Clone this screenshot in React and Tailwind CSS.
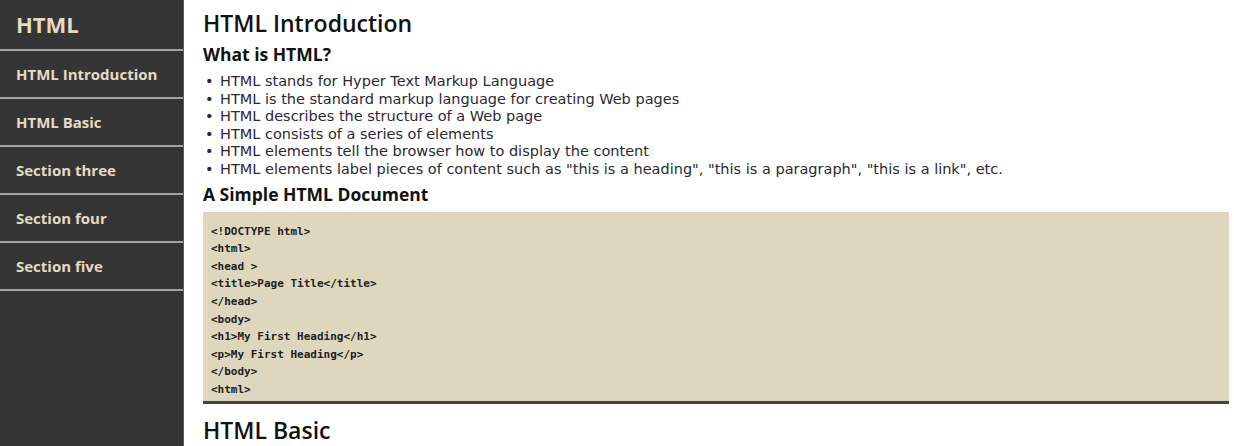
const navItems = [
  "HTML Introduction",
  "HTML Basic",
  "Section three",
  "Section four",
  "Section five",
];

const bullets = [
  "HTML stands for Hyper Text Markup Language",
  "HTML is the standard markup language for creating Web pages",
  "HTML describes the structure of a Web page",
  "HTML consists of a series of elements",
  "HTML elements tell the browser how to display the content",
  'HTML elements label pieces of content such as "this is a heading", "this is a paragraph", "this is a link", etc.',
];

const codeLines = [
  "<!DOCTYPE html>",
  "<html>",
  "<head >",
  "<title>Page Title</title>",
  "</head>",
  "<body>",
  "<h1>My First Heading</h1>",
  "<p>My First Heading</p>",
  "</body>",
  "<html>",
];

function Sidebar() {
  return (
    <nav className="w-[184px] shrink-0 border-r border-[#5a5a5a] bg-[#353535] text-[#e4dbc3] font-['Open_Sans',sans-serif]">
      <div className="flex h-[51px] items-center border-b-2 border-[#a5a5a5] pl-4 text-[22px] font-bold">
        HTML
      </div>
      {navItems.map((item) => (
        <div
          key={item}
          className="flex h-[48px] items-center border-b-2 border-[#a5a5a5] pl-4 text-[15px] font-bold"
        >
          {item}
        </div>
      ))}
    </nav>
  );
}

export default function App() {
  return (
    <div className="flex h-[446px] w-[1234px] overflow-hidden bg-white">
      <Sidebar />
      <main className="flex-1 pl-[19px] pr-[5px] pt-[9px] text-[#111]">
        <h1 className="font-['Open_Sans',sans-serif] text-[23px] font-semibold leading-[28px]">
          HTML Introduction
        </h1>
        <h2 className="mt-[6px] font-['Open_Sans',sans-serif] text-[17.5px] font-bold leading-[22px]">
          What is HTML?
        </h2>
        <ul className="mt-[8px] font-['DejaVu_Sans',sans-serif] text-[14.5px] leading-[17.6px] text-[#2a2a35]">
          {bullets.map((b) => (
            <li key={b} className="flex">
              <span className="w-[17px] pl-[2px]">•</span>
              <span>{b}</span>
            </li>
          ))}
        </ul>
        <h2 className="mt-[4px] font-['Open_Sans',sans-serif] text-[17.5px] font-bold leading-[22px]">
          A Simple HTML Document
        </h2>
        <pre className="mt-[7px] border-b-[3px] border-[#444] bg-[#ded7bd] pb-[2px] pl-2 pt-[11px] font-['DejaVu_Sans_Mono',monospace] text-[11px] font-bold leading-[17.6px] text-[#222]">
          {codeLines.join("\n")}
        </pre>
        <h1 className="mt-[12px] font-['Open_Sans',sans-serif] text-[23px] font-semibold leading-[28px]">
          HTML Basic
        </h1>
      </main>
    </div>
  );
}
